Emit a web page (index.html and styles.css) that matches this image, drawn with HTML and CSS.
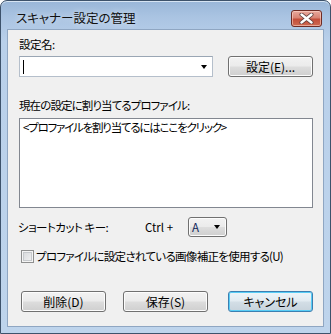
FILE: index.html
```html
<!DOCTYPE html>
<html lang="ja">
<head>
<meta charset="utf-8">
<link rel="stylesheet" href="styles.css">
</head>
<body>
<div class="window">
  <div class="titlebar">
    <span class="title">スキャナー設定の管理</span>
    <button class="close" aria-label="閉じる">
      <svg width="15" height="11" viewBox="0 0 15 11">
        <path d="M2.5 1.5 L12.5 9.5 M12.5 1.5 L2.5 9.5" stroke="#5a3a38" stroke-width="4" stroke-linecap="round"/>
        <path d="M2.5 1.5 L12.5 9.5 M12.5 1.5 L2.5 9.5" stroke="#ffffff" stroke-width="2.4" stroke-linecap="round"/>
      </svg>
    </button>
  </div>
  <div class="client">
    <div class="label l1">設定名:</div>
    <div class="row r1">
      <div class="combo">
        <span class="caret"></span>
        <span class="arrow"></span>
      </div>
      <button class="btn btn-set">設定(E)...</button>
    </div>
    <div class="label l2">現在の設定に割り当てるプロファイル:</div>
    <div class="listbox">&lt;プロファイルを割り当てるにはここをクリック&gt;</div>
    <div class="row r3">
      <span class="sc-label">ショートカット キー:</span>
      <span class="ctrl">Ctrl +</span>
      <div class="keycombo"><span>A</span><span class="arrow"></span></div>
    </div>
    <div class="row r4">
      <span class="checkbox"></span>
      <span class="cb-label">プロファイルに設定されている画像補正を使用する(U)</span>
    </div>
    <div class="row r5">
      <button class="btn">削除(D)</button>
      <button class="btn">保存(S)</button>
      <button class="btn btn-default">キャンセル</button>
    </div>
  </div>
</div>
</body>
</html>
```

FILE: styles.css
```css
html, body {
  margin: 0;
  padding: 0;
  background: #ffffff;
}
body {
  font-family: "Noto Sans CJK JP", "Noto Sans", sans-serif;
  font-size: 11.5px;
  letter-spacing: -0.5px;
  font-feature-settings: "palt";
  color: #000;
}
.window {
  width: 331px;
  height: 334px;
  box-sizing: border-box;
  border: 1px solid #3d526b;
  border-radius: 7px 7px 0 0;
  background: linear-gradient(to bottom, #99b6d8 0px, #aac4e2 16px, #b9d0ea 40px, #bed4ec 100%);
  padding: 0 6px 6px 6px;
  display: flex;
  flex-direction: column;
  box-shadow: inset 0 1px 0 #d6e4f3;
}
.titlebar {
  height: 28px;
  flex: none;
  display: flex;
  align-items: flex-start;
  justify-content: space-between;
  padding: 0 2px 0 9px;
}
.title {
  margin-top: 8px;
  line-height: 18px;
  font-size: 12.5px;
  letter-spacing: 0;
  color: #111;
  text-shadow: 0 0 6px rgba(255,255,255,0.7);
}
.close {
  margin-top: 9px;
  width: 31px;
  height: 17px;
  padding: 0;
  border: 1px solid #6e2b24;
  border-radius: 3px;
  background: linear-gradient(to bottom, #e9a99d 0%, #d98474 45%, #c44e3a 55%, #cd6a52 100%);
  box-shadow: inset 0 0 0 1px rgba(255,220,210,0.55);
  display: flex;
  align-items: center;
  justify-content: center;
}
.client {
  flex: 1;
  border: 1px solid #8fa6c2;
  background: #f0f0f0;
}
.label {
  line-height: 16px;
  padding-left: 11px;
}
.l1 { margin-top: 6px; }
.row { display: flex; align-items: center; }
.r1 {
  margin-top: 4px;
  height: 21px;
  padding-left: 11px;
}
.combo {
  width: 194px;
  height: 21px;
  box-sizing: border-box;
  border: 1px solid #b5bfcb;
  border-top-color: #9aa6b4;
  background: #fff;
  display: flex;
  align-items: center;
  justify-content: space-between;
  padding: 0 5px 0 3px;
}
.caret {
  width: 1px;
  height: 14px;
  background: #000;
}
.arrow {
  width: 0;
  height: 0;
  border-left: 3.5px solid transparent;
  border-right: 3.5px solid transparent;
  border-top: 4px solid #000;
}
.btn {
  font-family: inherit;
  font-size: 12px;
  letter-spacing: 0;
  font-feature-settings: "palt";
  color: #000;
  width: 85px;
  height: 21px;
  padding: 0;
  box-sizing: border-box;
  border: 1px solid #707070;
  border-radius: 3px;
  background: linear-gradient(to bottom, #f2f2f2 0%, #ebebeb 48%, #dddddd 52%, #cfcfcf 100%);
  box-shadow: inset 0 0 0 1px #fcfcfc;
  line-height: 18px;
}
.btn-set { margin-left: 15px; }
.l2 { margin-top: 20px; letter-spacing: -0.9px; }
.listbox {
  margin: 5px 0 0 11px;
  width: 294px;
  height: 90px;
  box-sizing: border-box;
  border: 1px solid #828790;
  background: #fff;
  padding: 0 3px;
  line-height: 16px;
  letter-spacing: -1.2px;
}
.r3 {
  margin-top: 9px;
  height: 20px;
  padding-left: 10px;
}
.sc-label { width: 127px; }
.ctrl { width: 43px; letter-spacing: 0; }
.keycombo {
  width: 39px;
  height: 20px;
  box-sizing: border-box;
  border: 1px solid #707070;
  border-radius: 3px;
  background: linear-gradient(to bottom, #f2f2f2 0%, #ebebeb 48%, #dddddd 52%, #cfcfcf 100%);
  box-shadow: inset 0 0 0 1px #fcfcfc;
  display: flex;
  align-items: center;
  justify-content: space-between;
  padding: 0 6px 0 3px;
  color: #0d1f5a;
}
.r4 {
  margin-top: 11px;
  height: 16px;
  padding-left: 13px;
}
.cb-label { letter-spacing: -0.7px; }
.checkbox {
  width: 13px;
  height: 13px;
  box-sizing: border-box;
  border: 1px solid #8e8f8f;
  background: linear-gradient(to bottom right, #d4d6d9, #f4f4f4);
  box-shadow: inset 0 0 0 1px #f4f4f4, inset 0 0 0 2px #c6c9cc;
  margin-right: 2px;
}
.r5 {
  margin-top: 27px;
  padding-left: 13px;
  height: 21px;
}
.r5 .btn:nth-child(2) { margin-left: 17px; }
.r5 .btn:nth-child(3) { margin-left: 20px; }
.btn-default {
  border-color: #3c7fb1;
  box-shadow: inset 0 0 0 1px #58cdf6;
  background: linear-gradient(to bottom, #eef5f9 0%, #e2ebf1 48%, #d3dee6 52%, #c7d3dc 100%);
}
```
